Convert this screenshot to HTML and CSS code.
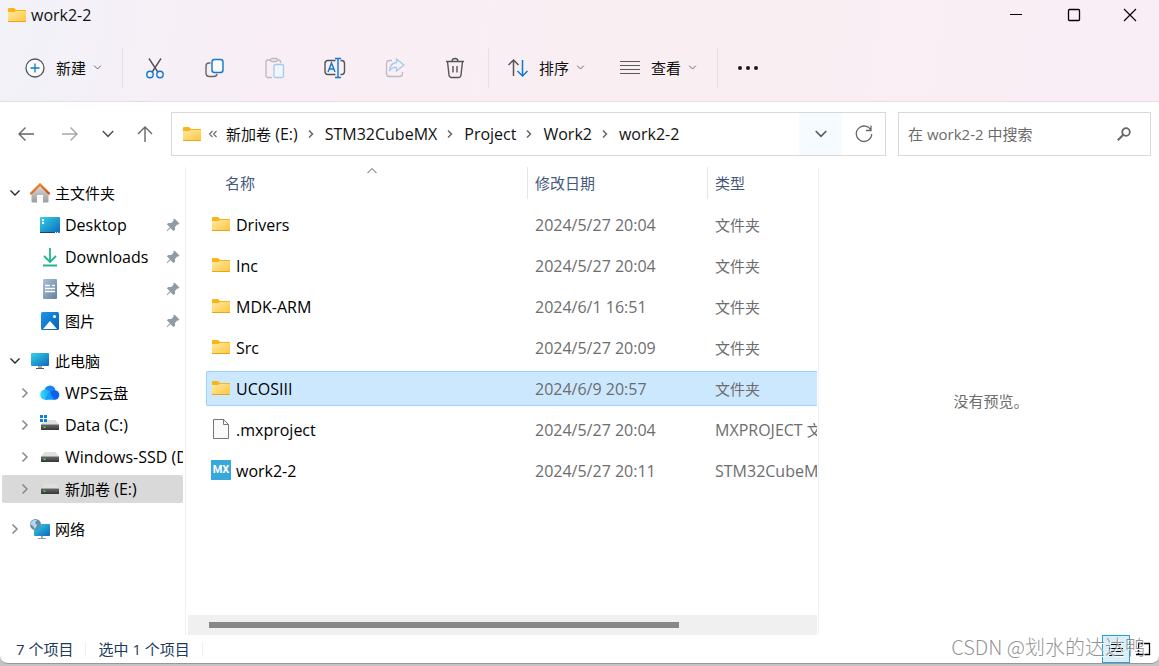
FILE: index.html
```html
<!DOCTYPE html>
<html lang="zh-CN">
<head>
<meta charset="utf-8">
<title>work2-2</title>
<link rel="stylesheet" href="styles.css">
</head>
<body>
<svg class="defs" aria-hidden="true">
  <defs>
    <linearGradient id="gFolder" x1="0" y1="0" x2="1" y2="1"><stop offset="0" stop-color="#ffe8a3"/><stop offset="1" stop-color="#fcc73c"/></linearGradient>
    <linearGradient id="gScreen" x1="0" y1="0" x2="1" y2="1"><stop offset="0" stop-color="#35d3e6"/><stop offset="1" stop-color="#0b68bd"/></linearGradient>
    <linearGradient id="gRoof" x1="0" y1="0" x2="1" y2="1"><stop offset="0" stop-color="#f79a2a"/><stop offset="1" stop-color="#d14a10"/></linearGradient>
    <linearGradient id="gWall" x1="0" y1="0" x2="0" y2="1"><stop offset="0" stop-color="#dcdcdc"/><stop offset="1" stop-color="#9d9d9d"/></linearGradient>
    <linearGradient id="gDoc" x1="0" y1="0" x2="1" y2="1"><stop offset="0" stop-color="#abc0d8"/><stop offset="1" stop-color="#64809f"/></linearGradient>
    <linearGradient id="gPic" x1="0" y1="0" x2="1" y2="1"><stop offset="0" stop-color="#1f97e6"/><stop offset="1" stop-color="#0560b8"/></linearGradient>
    <linearGradient id="gCloud" x1="0" y1="0" x2="1" y2="0"><stop offset="0" stop-color="#37e0ea"/><stop offset="1" stop-color="#1a9cff"/></linearGradient>
    <linearGradient id="gDrive" x1="0" y1="0" x2="0" y2="1"><stop offset="0" stop-color="#6a6a6a"/><stop offset="1" stop-color="#353535"/></linearGradient>
    <symbol id="folder" viewBox="0 0 20 20"><path d="M1 4q0-1 1-1h5l2 2h10v3H1z" fill="#f9b416"/><path d="M1 7h6l2-1h10v10q0 1-1 1H2q-1 0-1-1z" fill="url(#gFolder)"/><path d="M1 16.500h18" stroke="#e8a520"/></symbol>
    <symbol id="pin" viewBox="0 0 16 16"><path d="M9.500 1.500 14.500 6.500 13.300 7.700 12.500 7.300 10 10 10 13 8.500 14 5.600 11.200 2 14.300 1.500 13.800 4.800 10.200 2 7.500 3 6 6.200 6 8.700 3.400 8.300 2.700z" fill="#919ba5"/></symbol>
    <symbol id="down" viewBox="0 0 12 12"><path d="m1.500 3.500 4.500 4.500 4.500-4.500" fill="none" stroke="currentColor" stroke-width="1.300"/></symbol>
    <symbol id="right" viewBox="0 0 12 12"><path d="m3.500 1.500 4.500 4.500-4.500 4.500" fill="none" stroke="currentColor" stroke-width="1.500"/></symbol>
    <symbol id="crumb" viewBox="0 0 12 12"><path d="m4 2.500 3.500 3.500L4 9.500" fill="none" stroke="#666" stroke-width="1.500"/></symbol>
    <symbol id="drive" viewBox="0 0 20 20"><path d="M4.500 5h11L19 10H1z" fill="#dddfe1"/><path d="M1 9.500h18v5.500H1z" fill="url(#gDrive)"/><path d="M3.500 11.500h2v1.500h-2z" fill="#3ee23e"/></symbol>
  </defs>
</svg>
<div class="window">
  <header class="chrome">
    <div class="titlebar">
      <svg class="i20"><use href="#folder"/></svg>
      <h1 class="title">work2-2</h1>
      <div class="caption">
        <button class="capbtn" aria-label="最小化"><svg class="i16" viewBox="0 0 16 16"><path d="M2 7.500h12" stroke="#000"/></svg></button>
        <button class="capbtn" aria-label="最大化"><svg class="i16" viewBox="0 0 16 16"><rect x="2.500" y="2.500" width="11" height="11" rx="1" fill="none" stroke="#000" stroke-width="1.300"/></svg></button>
        <button class="capbtn" aria-label="关闭"><svg class="i16" viewBox="0 0 16 16"><path d="m2 2 12 12M14 2 2 14" stroke="#000" stroke-width="1.200"/></svg></button>
      </div>
    </div>
    <div class="toolbar">
      <button class="cmd first"><svg class="i22" viewBox="0 0 22 22" fill="none"><circle cx="11" cy="11" r="9" fill="#fafafa" stroke="#555" stroke-width="1.300"/><path d="M11 6.500v9M6.500 11h9" stroke="#0f78d0" stroke-width="1.300"/></svg><span>新建</span><svg class="i9"><use href="#down"/></svg></button>
      <i class="sep"></i>
      <button class="tool" aria-label="剪切"><svg class="i22" viewBox="0 0 22 22" fill="none" stroke-width="1.400"><path d="M5 1.500 13.800 15M17 1.500 8.200 15" stroke="#555"/><circle cx="6" cy="17.500" r="3.200" stroke="#0f78d0"/><circle cx="16" cy="17.500" r="3.200" stroke="#0f78d0"/></svg></button>
      <button class="tool" aria-label="复制"><svg class="i22" viewBox="0 0 22 22" fill="none" stroke-width="1.400"><path d="M6.500 6H5Q2 6 2 9v7q0 3.500 3.500 3.500H10q2.500 0 3-2.500" stroke="#666"/><rect x="8" y="2.500" width="11" height="13" rx="2.500" fill="#fafafa" stroke="#0f78d0"/></svg></button>
      <button class="tool" aria-label="粘贴"><svg class="i22" viewBox="0 0 22 22" fill="none" stroke-width="1.300"><path d="M6.500 3H4Q2 3 2 5v13.500q0 2 2 2h4M13.500 3h1q2 0 2 2v1" stroke="#bbb"/><rect x="6.500" y="1.500" width="7" height="3" rx="1.500" stroke="#bbb"/><rect x="10" y="7.500" width="9.500" height="13" rx="1.500" fill="#f4f5fb" stroke="#a0cbed"/></svg></button>
      <button class="tool" aria-label="重命名"><svg class="i22" viewBox="0 0 22 22" fill="none" stroke-width="1.400"><path d="M11.500 3.500H4Q1 3.500 1 6.500v8q0 3 3 3h7.500M16.500 3.500h1q3 0 3 3v8q0 3-3 3h-1" stroke="#555"/><path d="m4 15 3.500-9L11 15M5.200 12h4.600M14 1.500v19M11 1.500h6M11 20.500h6" stroke="#0f78d0"/></svg></button>
      <button class="tool" aria-label="共享"><svg class="i22" viewBox="0 0 22 22" fill="none" stroke-width="1.300"><path d="M8 3.500H5.500q-3 0-3 3v10q0 3 3 3h10q3 0 3-3V15" stroke="#bbb"/><path d="M12.500 2 20 8l-7.500 6v-3.500Q8 10 5.500 14 6 6 12.500 5.500z" stroke="#a0cbed"/></svg></button>
      <button class="tool" aria-label="删除"><svg class="i22" viewBox="0 0 22 22" fill="none" stroke="#555" stroke-width="1.400"><path d="M2 4.500h18M8 4.500Q8 1.500 11 1.500t3 3M3.500 4.500 5 18q.3 2.500 2.500 2.500h7Q16.700 20.500 17 18l1.500-13.500M9 9v6.500M13 9v6.500"/></svg></button>
      <i class="sep"></i>
      <button class="cmd"><svg class="i22" viewBox="0 0 22 22" fill="none" stroke-width="1.500"><path d="M6.500 19V3M1.500 8l5-5 5 5" stroke="#555"/><path d="M15.500 3v16M10.500 14l5 5 5-5" stroke="#0f78d0"/></svg><span>排序</span><svg class="i9"><use href="#down"/></svg></button>
      <button class="cmd view"><svg class="i22" viewBox="0 0 22 22"><path d="M1 4.500h20M1 8.500h20M1 12.500h20M1 16.500h20" stroke="#5b5b5b" stroke-width="1.200"/></svg><span>查看</span><svg class="i9"><use href="#down"/></svg></button>
      <i class="sep"></i>
      <button class="tool" aria-label="更多"><svg class="i22" viewBox="0 0 22 22" fill="#1a1a1a"><circle cx="3" cy="11" r="2"/><circle cx="11" cy="11" r="2"/><circle cx="19" cy="11" r="2"/></svg></button>
    </div>
  </header>

  <div class="navbar">
    <div class="history">
      <button class="plain" aria-label="后退"><svg class="i20" viewBox="0 0 20 20" fill="none" stroke="#666" stroke-width="1.400"><path d="M18 10H3M9.500 3.500 3 10l6.500 6.500"/></svg></button>
      <button class="plain" aria-label="前进"><svg class="i20" viewBox="0 0 20 20" fill="none" stroke="#a6a6a6" stroke-width="1.400"><path d="M2 10h15M10.500 3.500 17 10l-6.500 6.500"/></svg></button>
      <button class="plain recent" aria-label="最近"><svg class="i14"><use href="#down"/></svg></button>
      <button class="plain" aria-label="向上"><svg class="i20" viewBox="0 0 20 20" fill="none" stroke="#666" stroke-width="1.400"><path d="M10 18V3M3 10l7-7 7 7"/></svg></button>
    </div>
    <nav class="address" aria-label="地址">
      <svg class="i20"><use href="#folder"/></svg>
      <svg class="more" viewBox="0 0 10 10" fill="none" stroke="#666" stroke-width="1.100"><path d="M4.500 2 1.500 5l3 3M8.500 2l-3 3 3 3"/></svg>
      <a class="crumb" href="#"><span class="zh">新加卷</span> (E:)</a><svg class="i12"><use href="#crumb"/></svg>
      <a class="crumb" href="#">STM32CubeMX</a><svg class="i12"><use href="#crumb"/></svg>
      <a class="crumb" href="#">Project</a><svg class="i12"><use href="#crumb"/></svg>
      <a class="crumb" href="#">Work2</a><svg class="i12"><use href="#crumb"/></svg>
      <a class="crumb" href="#">work2-2</a>
      <button class="dropdown" aria-label="历史地址"><svg class="i14"><use href="#down"/></svg></button>
      <button class="refresh" aria-label="刷新"><svg class="i20" viewBox="0 0 20 20" fill="none" stroke="#666" stroke-width="1.300"><path d="M17 6.500A7.700 7.700 0 1 0 17.700 10M17 1.500v5h-5"/></svg></button>
    </nav>
    <div class="search">
      <input class="query" type="text" aria-label="搜索" placeholder="在 work2-2 中搜索">
      <button class="plain" aria-label="开始搜索"><svg class="i16" viewBox="0 0 16 16" fill="none" stroke="#666"><circle cx="10" cy="6" r="3.800" stroke-width="1.800"/><path d="m7.300 8.700-5.500 5.500" stroke-width="2"/></svg></button>
    </div>
  </div>

  <main class="main">
    <nav class="sidebar" aria-label="导航窗格">
      <ul class="tree">
        <li><a class="node open" href="#"><svg class="i12"><use href="#down"/></svg><svg class="i20" viewBox="0 0 20 20"><path d="M1.500 10 10 2l8.500 8v8.500q0 1-1 1H13V12H7v7.500H2.500q-1 0-1-1z" fill="url(#gWall)"/><path d="m1 10.500 9-9 9 9" fill="none" stroke="url(#gRoof)" stroke-width="2.400" stroke-linecap="round"/></svg><span class="zh">主文件夹</span></a></li>
        <li><a class="node child" href="#"><svg class="i20" viewBox="0 0 20 20"><rect y="2" width="20" height="16" rx="1" fill="url(#gScreen)"/><path d="M2 4h2v2H2zM2 7h2v2H2z" fill="#fff"/><path d="M0 17.500h15" stroke="#17436f"/><path d="M15 17.500h4" stroke="#fff" stroke-dasharray="1"/></svg><span class="label">Desktop</span><svg class="i16"><use href="#pin"/></svg></a></li>
        <li><a class="node child" href="#"><svg class="i20" viewBox="0 0 20 20" fill="none" stroke="#23b58c" stroke-width="1.800"><path d="M10 1v14M4 9l6 6 6-6M3 18.500h14"/></svg><span class="label">Downloads</span><svg class="i16"><use href="#pin"/></svg></a></li>
        <li><a class="node child" href="#"><svg class="i20" viewBox="0 0 20 20"><rect x="3" width="14" height="20" rx="1" fill="url(#gDoc)"/><path d="M5 6.500h5M5 9.500h10M5 12.500h10M12 6.500h3" stroke="#fff" stroke-width="1.500"/></svg><span class="label zh">文档</span><svg class="i16"><use href="#pin"/></svg></a></li>
        <li><a class="node child" href="#"><svg class="i20" viewBox="0 0 20 20"><rect x="1" y="1" width="18" height="18" rx="1.500" fill="url(#gPic)"/><path d="m3 18 7-8 7 8z" fill="#fff"/><circle cx="14.500" cy="5.500" r="1.500" fill="#fff"/></svg><span class="label zh">图片</span><svg class="i16"><use href="#pin"/></svg></a></li>
      </ul>
      <ul class="tree">
        <li><a class="node open" href="#"><svg class="i12"><use href="#down"/></svg><svg class="i20" viewBox="0 0 20 20"><rect x="1" y="2" width="18" height="13" rx="1" fill="url(#gScreen)"/><path d="M8 15h4v2H8z" fill="#aaa"/><path d="M6 17.500h8" stroke="#555"/></svg><span class="zh">此电脑</span></a></li>
        <li><a class="node sub" href="#"><svg class="i12"><use href="#right"/></svg><svg class="i20" viewBox="0 0 20 20"><circle cx="10" cy="8" r="5.500" fill="#1686f2"/><circle cx="14.500" cy="12" r="4.800" fill="#0a62ee"/><circle cx="5.500" cy="11.500" r="5.300" fill="url(#gCloud)"/><path d="M5 16.800h9.500L9 9z" fill="#129cf8"/></svg><span class="label">WPS<span class="zh">云盘</span></span></a></li>
        <li><a class="node sub" href="#"><svg class="i12"><use href="#right"/></svg><svg class="i20" viewBox="0 0 20 20"><use href="#drive"/><path d="M0 0h3v3H0zM4 0h3v3H4zM0 4h3v3H0zM4 4h3v3H4z" fill="#0b7fdb"/></svg><span class="label">Data (C:)</span></a></li>
        <li><a class="node sub" href="#"><svg class="i12"><use href="#right"/></svg><svg class="i20"><use href="#drive"/></svg><span class="label">Windows-SSD (D:)</span></a></li>
        <li><a class="node sub current" href="#"><svg class="i12"><use href="#right"/></svg><svg class="i20"><use href="#drive"/></svg><span class="label"><span class="zh">新加卷</span> (E:)</span></a></li>
      </ul>
      <ul class="tree">
        <li><a class="node" href="#"><svg class="i12"><use href="#right"/></svg><svg class="i20" viewBox="0 0 20 20"><rect x="4" y="5" width="16" height="12" rx="1" fill="url(#gScreen)"/><path d="M8 19.500h8" stroke="#999"/><path d="M11 17h2v2h-2z" fill="#aaa"/><circle cx="5.500" cy="5.500" r="5.500" fill="#5f8fb0"/><path d="M2 2q3-2 5-1L5 4l2 2-2 4-2-3-3-2z" fill="#b9d6e6"/></svg><span class="zh">网络</span></a></li>
      </ul>
    </nav>

    <section class="files">
      <div class="tablebox">
        <table class="list">
          <colgroup><col class="cname"><col class="cdate"><col></colgroup>
          <thead><tr>
            <th><div class="head headname">名称<svg class="sort" viewBox="0 0 12 12"><path d="m1.500 8 4.500-4.500L10.500 8" fill="none" stroke="#555"/></svg></div></th>
            <th><div class="head">修改日期</div></th>
            <th><div class="head last">类型</div></th>
          </tr></thead>
          <tbody>
            <tr><td><div class="name"><svg class="i20"><use href="#folder"/></svg>Drivers</div></td><td>2024/5/27 20:04</td><td><span class="zh">文件夹</span></td></tr>
            <tr><td><div class="name"><svg class="i20"><use href="#folder"/></svg>Inc</div></td><td>2024/5/27 20:04</td><td><span class="zh">文件夹</span></td></tr>
            <tr><td><div class="name"><svg class="i20"><use href="#folder"/></svg>MDK-ARM</div></td><td>2024/6/1 16:51</td><td><span class="zh">文件夹</span></td></tr>
            <tr><td><div class="name"><svg class="i20"><use href="#folder"/></svg>Src</div></td><td>2024/5/27 20:09</td><td><span class="zh">文件夹</span></td></tr>
            <tr class="selected"><td><div class="name"><svg class="i20"><use href="#folder"/></svg>UCOSIII</div></td><td>2024/6/9 20:57</td><td><span class="zh">文件夹</span></td></tr>
            <tr><td><div class="name"><svg class="i20" viewBox="0 0 20 20"><path d="M2.500.5h10l5 5v14h-15z" fill="#fafafa" stroke="#777"/><path d="M12.500.5v5h5" fill="none" stroke="#777"/></svg>.mxproject</div></td><td>2024/5/27 20:04</td><td>MXPROJECT <span class="zh">文件</span></td></tr>
            <tr><td><div class="name"><span class="mx">MX</span>work2-2</div></td><td>2024/5/27 20:11</td><td>STM32CubeMX</td></tr>
          </tbody>
        </table>
      </div>
      <div class="scroll"><div class="thumb"></div></div>
    </section>

    <aside class="preview">没有预览。</aside>
  </main>

  <footer class="status">
    <span class="stat"><span class="num">7</span> 个项目</span>
    <span class="stat">选中 <span class="num">1</span> 个项目</span>
    <div class="views">
      <button class="viewbtn on" aria-label="详细信息"><svg class="i16" viewBox="0 0 16 16"><path d="M3 3.500h10M1 7.500h14M3 10.500h10M1 14.500h14" stroke="#000" stroke-width="1.200"/></svg></button>
      <button class="viewbtn" aria-label="大图标"><svg class="i16" viewBox="0 0 16 16"><path d="M3.500 2.500h11v11h-11zM1 13.500h2" fill="none" stroke="#000" stroke-width="1.300"/></svg></button>
    </div>
  </footer>
  <div class="watermark">CSDN @划水的达达鸭</div>
</div>
</body>
</html>
```

FILE: styles.css
```css
* { box-sizing: border-box; }
body {
  margin: 0;
  background: #c4c4c4;
  color: #111;
  font: 16px/24px "Open Sans", "Noto Sans CJK SC", sans-serif;
}
button, input { font: inherit; color: inherit; border: 0; padding: 0; background: none; }
a { color: inherit; text-decoration: none; }
svg { flex: none; display: block; }
.defs { position: absolute; width: 0; height: 0; }
.zh { font-size: 15px; }
.i9 { width: 9px; height: 9px; color: #666; }
.i12 { width: 12px; height: 12px; }
.i14 { width: 14px; height: 14px; }
.i16 { width: 16px; height: 16px; }
.i20 { width: 20px; height: 20px; }
.i22 { width: 22px; height: 22px; }

.window {
  position: relative;
  display: flex;
  flex-direction: column;
  height: calc(100vh - 2px);
  background: #fff;
  border-bottom: 1px solid #999;
  border-radius: 0 0 8px 8px;
  overflow: hidden;
}

/* Title bar and commands */
.chrome {
  border-bottom: 1px solid #e3dce2;
  background: linear-gradient(100deg, #f2f2f9 0%, #f9eef5 24%, #f9eff2 60%, #f9eef6 100%);
}
.titlebar { display: flex; align-items: center; height: 30px; padding-left: 7px; }
.title { margin: 0 0 0 4px; font-size: 16px; font-weight: 400; }
.caption { display: flex; margin-left: auto; }
.capbtn { display: flex; align-items: center; justify-content: center; width: 58px; height: 30px; }
.capbtn:last-child { width: 56px; padding-right: 2px; }
.toolbar { display: flex; align-items: center; height: 71px; padding: 4px 0 0 24px; }
.cmd { display: flex; align-items: center; height: 40px; font-size: 15px; }
.cmd span { margin: 0 7px 0 10px; }
.cmd.first { margin-right: 20px; }
.cmd.view { margin: 0 20px 0 34px; }
.sep { width: 1px; height: 40px; margin-right: 2px; background: #e6dfe5; }
.tool { display: flex; align-items: center; justify-content: center; width: 60px; height: 40px; }
.tool + .sep { margin: 0 18px 0 3px; }
.cmd.view + .sep { margin-right: 0; }

/* Address row */
.navbar { display: flex; align-items: center; height: 65px; padding: 0 8px 2px 16px; }
.history { display: flex; align-items: center; gap: 24px; width: 155px; }
.plain { display: flex; color: #555; }
.recent { margin: 0 -6px 0 -5px; padding: 0 2px; }
.address { display: flex; flex: 1; align-items: center; height: 44px; padding-left: 10px; border: 1px solid #d9d9d9; }
.address .i12 { margin: 0 8px 0 7px; }
.more { width: 10px; height: 10px; margin: 0 8px 0 6px; }
.crumb { white-space: nowrap; }
.dropdown, .refresh { display: flex; align-items: center; justify-content: center; width: 43px; height: 42px; color: #555; }
.dropdown { margin-left: auto; background: #f5fbff; }
.search { display: flex; align-items: center; width: 253px; height: 44px; margin-left: 12px; padding: 0 18px 0 9px; border: 1px solid #d9d9d9; }
.query { flex: 1; min-width: 0; outline: 0; font-size: 15px; }
.query::placeholder { color: #6b6b6b; opacity: 1; }

/* Panes */
.main { display: grid; grid-template-columns: 186px minmax(0, 633fr) minmax(0, 340fr); flex: 1; min-height: 0; }
.sidebar { padding: 12px 2px 0; border-right: 1px solid #f0f0f0; overflow: hidden; }
.tree { display: grid; gap: 4px; margin: 0 0 12px; padding: 0; list-style: none; }
.tree li { min-width: 0; }
.node { display: flex; align-items: center; height: 28px; padding-left: 7px; color: #000; }
.node .i12 { margin-right: 9px; color: #888; }
.node .i20 { margin-right: 5px; }
.node.open .i12 { color: #222; }
.node.sub { padding-left: 17px; }
.node.child { padding-left: 38px; }
.node .label { flex: 1; overflow: hidden; white-space: nowrap; }
.node .i16 { margin-right: 2px; }
.node.current { background: #d9d9d9; border-radius: 2px; }
.files { display: flex; flex-direction: column; min-width: 0; border-right: 1px solid #f0f0f0; padding: 0 1px 0 2px; }
.tablebox { flex: 1; min-height: 0; padding-left: 18px; overflow: hidden; }
.list { width: 100%; margin-top: -6px; table-layout: fixed; border-collapse: separate; border-spacing: 0 6px; }
.cname { width: 322px; }
.cdate { width: 180px; }
.list th { height: 34px; padding: 0; font-weight: 400; text-align: left; vertical-align: top; }
.head { position: relative; height: 32px; padding-left: 7px; border-right: 1px solid #e5e5e5; color: #44597a; font-size: 15px; line-height: 32px; }
.head.last { border: 0; }
.headname { padding-left: 19px; }
.sort { position: absolute; top: -2px; left: 160px; width: 12px; height: 12px; }
.list td { height: 35px; padding: 0 0 0 7px; border: solid transparent; border-width: 1px 0; color: #6d6d6d; overflow: hidden; white-space: nowrap; }
.list td:first-child { padding-left: 4px; border-left-width: 1px; color: #000; }
.name { display: flex; align-items: center; gap: 5px; }
.name .i20 { margin-bottom: 1px; }
.selected td { background: #cce8ff; border-color: #99d1ff; }
.selected td:first-child { border-radius: 2px 0 0 2px; }
.mx { width: 20px; height: 20px; margin-bottom: 1px; background: #38a8dc; color: #fff; font: bold 11px/19px Roboto, sans-serif; text-align: center; }
.scroll { height: 20px; padding: 7px 21px; background: #f0f0f0; }
.thumb { width: 80%; height: 6px; background: #888; }
.preview { display: flex; align-items: center; justify-content: center; padding-left: 4px; color: #6d6d6d; font-size: 15px; }

/* Status bar */
.status { display: flex; align-items: center; height: 28px; padding: 0 4px; color: #1e395b; font-size: 15px; }
.stat { padding: 0 12px; border-right: 1px solid #f0f0f0; line-height: 14px; }
.views { display: flex; gap: 1px; margin-left: auto; }
.viewbtn { display: flex; align-items: center; justify-content: center; width: 24px; height: 28px; }
.viewbtn.on { width: 28px; border: 1px solid #26a0da; background: #d9eef8; }
.watermark {
  position: absolute;
  right: 14px;
  bottom: 1px;
  color: rgba(110, 110, 110, 0.75);
  font: 300 20px/30px "Noto Sans CJK SC", sans-serif;
  text-shadow: 1px 1px 0 #fff;
  pointer-events: none;
}
```
